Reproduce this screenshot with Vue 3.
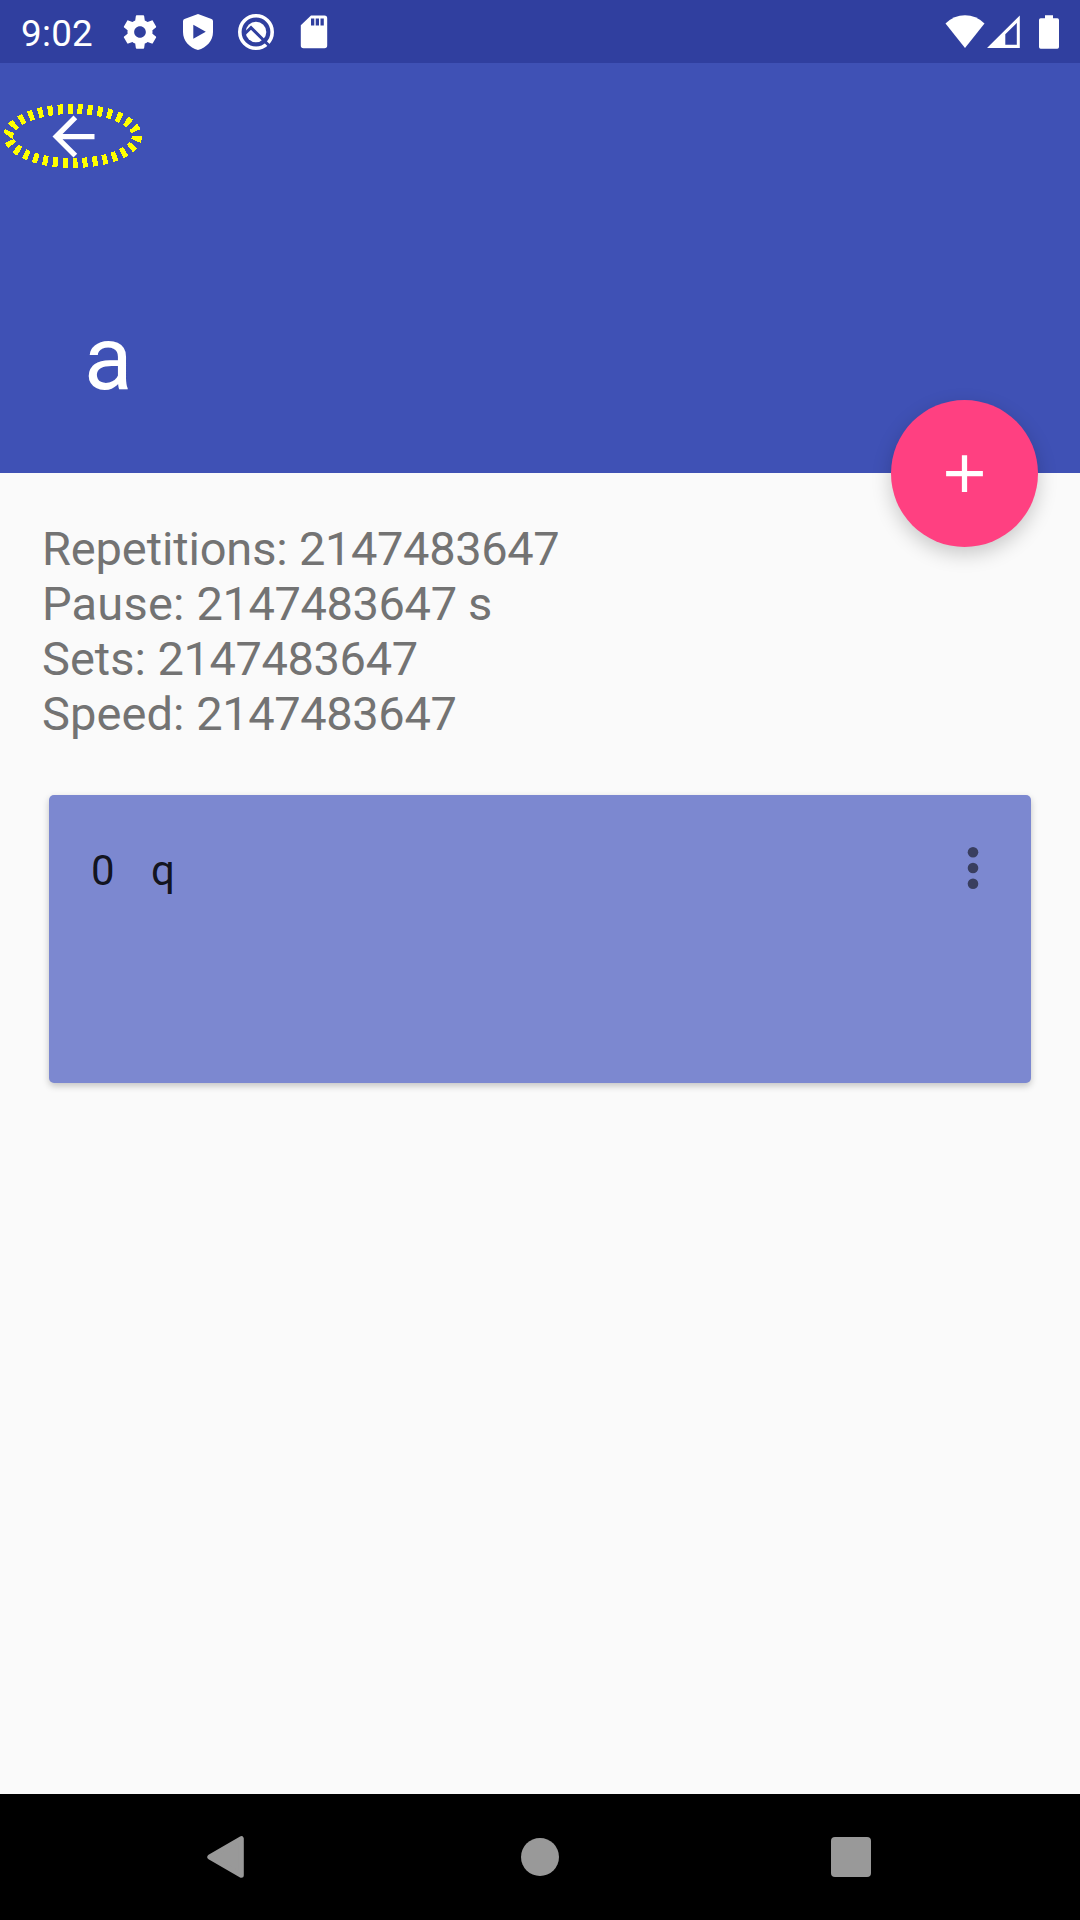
<script setup>
const details = [
  { label: 'Repetitions: ', value: '2147483647', spacing: -0.14 },
  { label: 'Pause: ', value: '2147483647 s', spacing: 0.2 },
  { label: 'Sets: ', value: '2147483647', spacing: 0 },
  { label: 'Speed: ', value: '2147483647', spacing: 0.08 },
]
</script>

<template>
  <div class="screen">
    <div class="status">
      <span class="clock">9:02</span>
      <div class="notifications">
        <svg width="40" height="40" viewBox="0 0 24 24"><path fill="#fff" d="M19.43 12.98c.04-.32.07-.64.07-.98s-.03-.66-.07-.98l2.11-1.65c.19-.15.24-.42.12-.64l-2-3.46c-.12-.22-.39-.3-.61-.22l-2.49 1c-.52-.4-1.08-.73-1.69-.98l-.38-2.65C14.46 2.18 14.25 2 14 2h-4c-.25 0-.46.18-.49.42l-.38 2.65c-.61.25-1.17.59-1.69.98l-2.49-1c-.23-.09-.49 0-.61.22l-2 3.46c-.13.22-.07.49.12.64l2.11 1.65c-.04.32-.07.65-.07.98s.03.66.07.98l-2.11 1.65c-.19.15-.24.42-.12.64l2 3.46c.12.22.39.3.61.22l2.49-1c.52.4 1.08.73 1.69.98l.38 2.65c.03.24.24.42.49.42h4c.25 0 .46-.18.49-.42l.38-2.65c.61-.25 1.17-.59 1.69-.98l2.49 1c.23.09.49 0 .61-.22l2-3.46c.12-.22.07-.49-.12-.64l-2.11-1.65zM12 15.5c-1.93 0-3.5-1.57-3.5-3.5s1.57-3.5 3.5-3.5 3.500 1.570 3.500 3.500-1.570 3.500-3.500 3.500z" /></svg>
        <svg width="40" height="40" viewBox="0 0 40 40"><path fill="#fff" fill-rule="evenodd" d="M20 2 L33.500 7 Q35 7.600 35 9.200 V20 C35 29 28.500 35.500 20 38 C11.500 35.500 5 29 5 20 V9.200 Q5 7.600 6.500 7 Z M15.300 12.800 V26.800 L27.800 19.800 Z" /></svg>
        <svg width="40" height="40" viewBox="0 0 40 40">
          <circle cx="20" cy="20" r="16.200" fill="none" stroke="#fff" stroke-width="3.600" />
          <circle cx="20" cy="20" r="10.300" fill="#fff" />
          <path fill="none" stroke="#303f9f" stroke-width="3" d="M9 21.500 L15 15.700 L34.500 35" />
        </svg>
        <svg width="40" height="40" viewBox="0 0 40 40"><path fill="#fff" fill-rule="evenodd" d="M17 3.500 H30.500 Q33.200 3.500 33.200 6.200 V33.500 Q33.200 36.200 30.500 36.200 H9.500 Q6.800 36.200 6.800 33.500 V13.300 Z M17 6.500 V13.500 H20.300 V6.500 Z M21.700 6.500 V13.500 H25 V6.500 Z M26.500 6.500 V13.500 H29.800 V6.500 Z" /></svg>
      </div>
      <div class="system">
        <svg width="40" height="34" viewBox="0 0 40 34"><path fill="#fff" d="M20 33 L0.500 8.500 Q9 0.300 20 0.300 Q31 0.300 39.500 8.500 Z" /></svg>
        <svg width="33" height="34" viewBox="0 0 33 34"><path fill="#fff" fill-rule="evenodd" d="M0 33 L32.800 0.500 V33 Z M18.300 19.300 V29.800 H29.800 V8 Z" /></svg>
        <svg class="battery" width="20" height="34" viewBox="0 0 20 34"><path fill="#fff" d="M6 0.200 H14 V3.300 H18.300 Q20 3.300 20 5 V32 Q20 33.800 18.300 33.800 H1.700 Q0 33.800 0 32 V5 Q0 3.300 1.700 3.300 H6 Z" /></svg>
      </div>
    </div>

    <header class="header">
      <div class="back">
        <svg width="63" height="63" viewBox="0 0 24 24"><path fill="#fff" d="M20 11H7.830l5.590-5.590L12 4l-8 8 8 8 1.410-1.410L7.830 13H20v-2z" /></svg>
        <svg class="focus" width="146" height="70" viewBox="0 0 146 70" shape-rendering="crispEdges"><ellipse cx="72.700" cy="35" rx="64.300" ry="27" fill="none" stroke="#ff0" stroke-width="10" pathLength="300" stroke-dasharray="5 5" /></svg>
      </div>
      <h1>a</h1>
      <button class="fab">
        <svg width="63" height="63" viewBox="0 0 24 24"><path fill="#fff" d="M19 13h-6v6h-2v-6H5v-2h6V5h2v6h6v2z" /></svg>
      </button>
    </header>

    <main>
      <div class="details">
        <div v-for="line in details" :key="line.label"><span :style="{ letterSpacing: line.spacing + 'px' }">{{ line.label }}</span><span class="value">{{ line.value }}</span></div>
      </div>
      <div class="card">
        <span class="index">0</span>
        <span class="name">q</span>
        <svg class="more" width="12" height="44" viewBox="0 0 12 44"><g fill="#000" fill-opacity="0.54"><circle cx="6" cy="6.200" r="5.300" /><circle cx="6" cy="22" r="5.300" /><circle cx="6" cy="37.800" r="5.300" /></g></svg>
      </div>
    </main>

    <nav>
      <svg width="38" height="44" viewBox="0 0 38 44"><path fill="#999" stroke="#999" stroke-width="5" stroke-linejoin="round" d="M34.300 3.700 V40.300 L2.800 22 Z" /></svg>
      <svg class="home" width="40" height="40" viewBox="0 0 40 40"><circle cx="20" cy="20" r="19" fill="#999" /></svg>
      <div class="square"></div>
    </nav>
  </div>
</template>

<style>
body {
  margin: 0;
}
</style>

<style scoped>
.screen {
  width: 1080px;
  height: 1920px;
  display: flex;
  flex-direction: column;
  background: #fafafa;
  font-family: Roboto, sans-serif;
  overflow: hidden;
}
svg {
  display: block;
}
.status {
  height: 63px;
  flex: none;
  background: #303f9f;
  display: flex;
  align-items: center;
  box-sizing: border-box;
  padding: 0 21px;
  color: #fff;
}
.clock {
  width: 99px;
  font-size: 36.750px;
  line-height: 44px;
  letter-spacing: 0.3px;
  margin-top: 4px;
}
.notifications {
  display: flex;
  gap: 18px;
}
.system {
  display: flex;
  margin-left: auto;
  gap: 2px;
}
.battery {
  margin-left: 17px;
}
.header {
  position: relative;
  height: 410px;
  flex: none;
  background: #3f51b5;
  color: #fff;
}
.back {
  position: relative;
  width: 63px;
  padding: 42px 0 0 42px;
}
.focus {
  position: absolute;
  left: 0;
  top: 38px;
}
h1 {
  margin: 138px 0 0 84px;
  font-size: 89.250px;
  line-height: 105px;
  font-weight: 400;
}
.fab {
  position: absolute;
  right: 42px;
  bottom: -74px;
  width: 147px;
  height: 147px;
  padding: 0;
  border: 0;
  border-radius: 50%;
  background: #ff4081;
  display: flex;
  align-items: center;
  justify-content: center;
  box-shadow: 0 7px 20px rgba(0, 0, 0, 0.2);
}
main {
  flex: 1;
}
.details {
  padding: 48px 42px 0;
  font-size: 47px;
  line-height: 55px;
  color: #737373;
  white-space: pre;
}
.value {
  letter-spacing: -0.4px;
}
.card {
  margin: 54px 49px 0;
  height: 288px;
  box-sizing: border-box;
  padding: 50px 52px 0 42px;
  display: flex;
  border-radius: 5px;
  background: #7c88d0;
  box-shadow: 0 3px 7px rgba(0, 0, 0, 0.22);
  font-size: 42px;
  line-height: 52px;
  color: rgba(0, 0, 0, 0.87);
}
.index {
  width: 60px;
}
.more {
  margin: 1px 0 0 auto;
}
nav {
  height: 126px;
  background: #000;
  display: flex;
  align-items: center;
  box-sizing: border-box;
  padding-left: 207px;
}
.home {
  margin-left: 275px;
}
.square {
  margin-left: 271px;
  width: 40px;
  height: 40px;
  border-radius: 4px;
  background: #999;
}
</style>
